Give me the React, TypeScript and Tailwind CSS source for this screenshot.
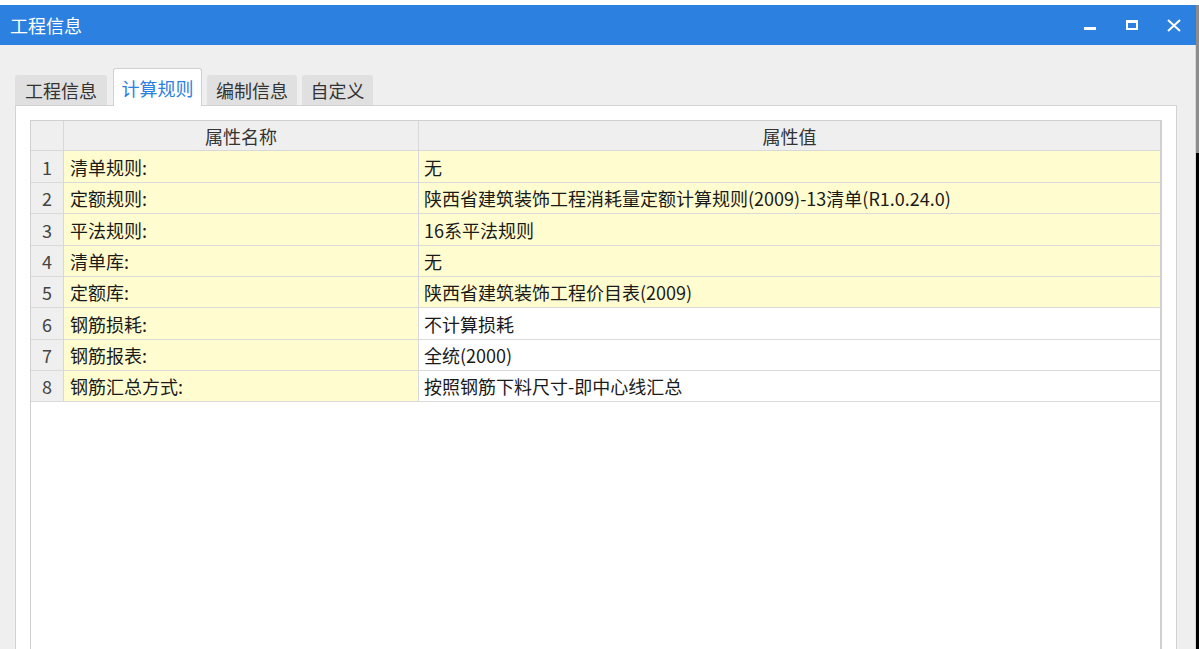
import React from 'react';

const rows = [
  { name: '清单规则:', value: '无', hl: true },
  { name: '定额规则:', value: '陕西省建筑装饰工程消耗量定额计算规则(2009)-13清单(R1.0.24.0)', hl: true },
  { name: '平法规则:', value: '16系平法规则', hl: true },
  { name: '清单库:', value: '无', hl: true },
  { name: '定额库:', value: '陕西省建筑装饰工程价目表(2009)', hl: true },
  { name: '钢筋损耗:', value: '不计算损耗', hl: false },
  { name: '钢筋报表:', value: '全统(2000)', hl: false },
  { name: '钢筋汇总方式:', value: '按照钢筋下料尺寸-即中心线汇总', hl: false },
];

// row heights add up to the 251px the reference rows take
const rowHeights = ['h-[32px]', 'h-[31px]', 'h-[32px]', 'h-[31px]', 'h-[31px]', 'h-[32px]', 'h-[31px]', 'h-[31px]'];

const tabs = [
  { label: '工程信息', cls: 'w-[92px]' },
  { label: '计算规则', cls: 'w-[89px]' },
  { label: '编制信息', cls: 'w-[90px]' },
  { label: '自定义', cls: 'w-[71px]' },
];

// Title bar window buttons
const WindowControls = () => (
  <div className="flex items-center h-full">
    <div className="w-[42px] flex justify-center pt-[6px]">
      <div className="w-[12px] h-[3px] bg-white" />
    </div>
    <div className="w-[42px] flex justify-center">
      <div className="w-[12px] h-[10px] border-white border-2 border-t-[3px]" />
    </div>
    <div className="w-[42px] flex justify-center">
      <svg width="14" height="13" viewBox="0 0 14 13" fill="none" stroke="white" strokeWidth="2">
        <path d="M1 1 L13 12 M13 1 L1 12" />
      </svg>
    </div>
  </div>
);

export default function App() {
  return (
    <div className="w-[1199px] h-[649px] overflow-hidden bg-white flex font-['Microsoft_YaHei','Noto_Sans_CJK_SC',sans-serif] text-[18px] text-[#1a1a1a]">
      <div className="w-[1196px] flex flex-col">
        <div className="h-[5px] bg-white" />
        {/* Title bar */}
        <div className="h-[40px] bg-[#2c80e0] flex items-center justify-between pl-[10px] pr-px">
          <span className="text-white text-[18px] leading-none">工程信息</span>
          <WindowControls />
        </div>
        {/* Body */}
        <div className="flex-1 bg-[#efefef] pt-[23px] pl-[15px] pr-[18px] flex flex-col border-r border-[#d8d8d8]">
          <div className="flex items-end gap-[5px] h-[37px]">
            {tabs.map((t, i) =>
              i === 1 ? (
                <div
                  key={t.label}
                  className={`relative z-10 -mb-px ml-px h-[38px] ${t.cls} bg-white border border-b-0 border-[#d0d0d0] rounded-t-[3px] flex items-center justify-center text-[#2c80e0] leading-none`}
                >
                  {t.label}
                </div>
              ) : (
                <div
                  key={t.label}
                  className={`h-[30px] ${t.cls} bg-[#e0e0e0] rounded-t-[3px] flex items-center justify-center text-[#333] leading-none`}
                >
                  {t.label}
                </div>
              )
            )}
          </div>
          {/* Panel */}
          <div className="flex-1 bg-white border border-b-0 border-[#d3d3d3] pt-[14px] pl-[14px] pr-[14px] flex flex-col">
            <div className="flex-1 border-l border-t border-r-2 border-[#d0d0d0] flex flex-col">
              <div className="flex h-[30px] border-b border-[#d8d8d8] bg-[#efefef] text-[#333]">
                <div className="w-[33px] border-r border-[#d8d8d8]" />
                <div className="w-[355px] border-r border-[#d8d8d8] flex items-center justify-center leading-none">属性名称</div>
                <div className="flex-1 flex items-center justify-center leading-none">属性值</div>
              </div>
              {rows.map((r, i) => (
                <div key={r.name} className={`flex ${rowHeights[i]} border-b border-[#dadada]`}>
                  <div className="w-[33px] border-r border-[#d8d8d8] bg-[#efefef] flex items-center justify-center text-[#444] leading-none">
                    {i + 1}
                  </div>
                  <div className="w-[355px] border-r border-[#d8d8d8] bg-[#fffdd0] flex items-center pl-[6px] leading-none">
                    {r.name}
                  </div>
                  <div className={`flex-1 flex items-center pl-[5px] leading-none ${r.hl ? 'bg-[#fffdd0]' : 'bg-white'}`}>
                    {r.value}
                  </div>
                </div>
              ))}
              <div className="flex-1 bg-white" />
            </div>
          </div>
        </div>
      </div>
      {/* Edge of the window behind */}
      <div className="w-[3px] flex flex-col">
        <div className="h-[5px] bg-white" />
        <div className="h-[148px] bg-[#8c8c8c]" />
        <div className="flex-1 bg-black" />
      </div>
    </div>
  );
}
